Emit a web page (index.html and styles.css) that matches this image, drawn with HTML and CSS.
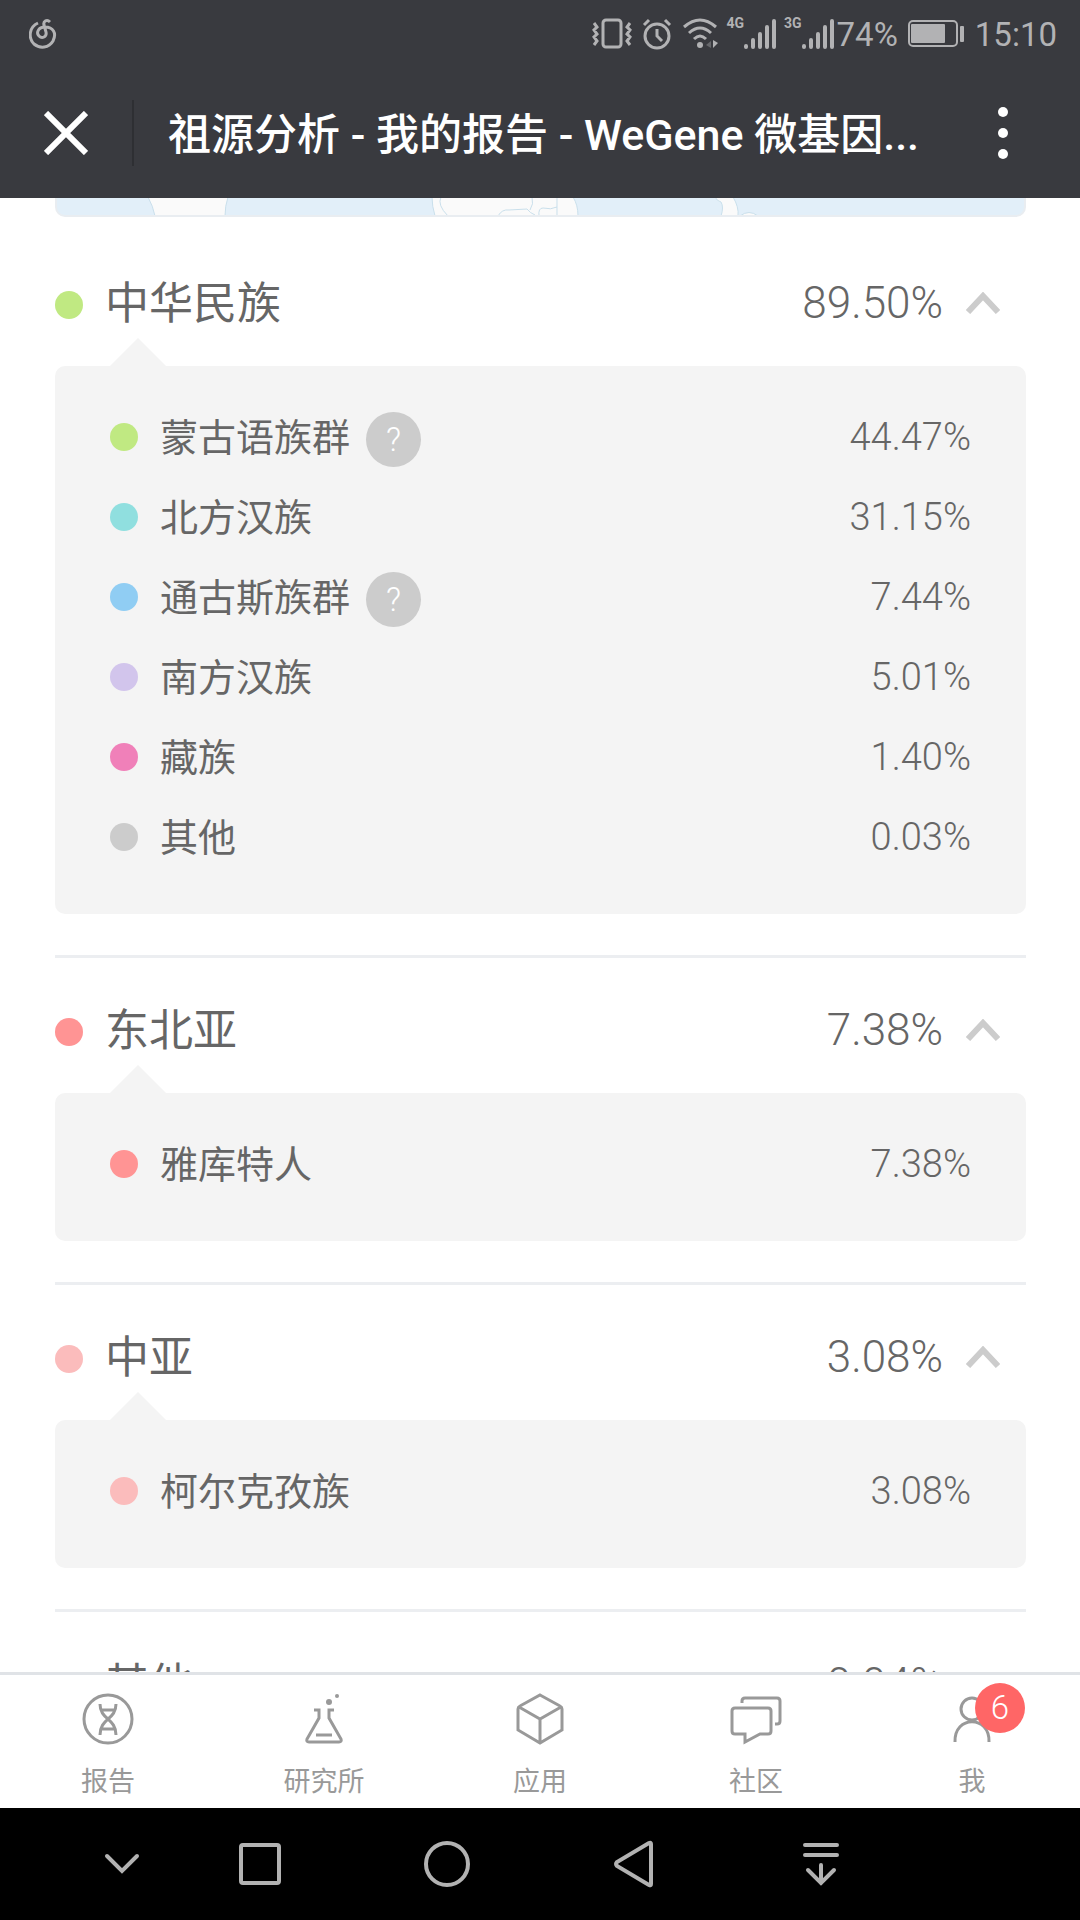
FILE: index.html
```
<!DOCTYPE html>
<html lang="zh-CN">
<head>
    <meta charset="UTF-8">
    <meta name="viewport" content="width=device-width, initial-scale=1.0">
    <title>祖源分析 - 我的报告 - WeGene 微基因</title>
    <link rel="stylesheet" href="styles.css">
</head>
<body>
    <header class="top">
        <div class="status-bar">
            <svg class="music" width="28" height="32" viewBox="0 0 28 32">
                <path d="M9 5C0 9 -1 20 5 26C11 31 20 30 24 23C28 15 24 9 16 9C9 9 7 15 10 18C13 21 18 19 17 14L15 7C14 3 18 1 21 4"/>
            </svg>
            <div class="status-icons">
                <svg width="40" height="32" viewBox="0 0 40 32">
                    <rect class="line" x="11" y="2" width="18" height="27" rx="3"/>
                    <path class="line" d="M2 5l3 4-3 3 3 4-3 3 3 4-3 4M38 5l-3 4 3 3-3 4 3 3-3 4 3 4"/>
                </svg>
                <svg class="alarm" width="30" height="32" viewBox="0 0 30 32">
                    <circle class="line" cx="15" cy="18" r="12"/>
                    <path class="line" d="M15 11v7l5 5M2 7l5-5M28 7l-5-5"/>
                </svg>
                <svg width="36" height="32" viewBox="0 0 36 32">
                    <path class="line" d="M2 9Q18 -5 34 9M7 15Q18 5 29 15M12 21Q18 15 24 21"/>
                    <circle class="fill" cx="18" cy="27" r="3"/>
                    <path class="dim" d="M29 23v7l-5-3z"/>
                    <path class="fill" d="M31 22v8l5-5z"/>
                </svg>
                <span class="net">4G</span>
                <svg width="32" height="32" viewBox="0 0 32 32">
                    <path class="signal" d="M2 28v1M9 22v7M16 16v13M23 9v20M30 3v26"/>
                </svg>
                <span class="net">3G</span>
                <svg width="32" height="32" viewBox="0 0 32 32">
                    <path class="signal" d="M2 28v1M9 22v7M16 16v13M23 9v20M30 3v26"/>
                </svg>
                <span class="battery-text">74%</span>
                <svg class="battery" width="57" height="28" viewBox="0 0 57 28">
                    <rect class="thin" x="1" y="1" width="48" height="25" rx="4"/>
                    <rect class="fill" x="3" y="4" width="34" height="19" rx="1"/>
                    <rect class="fill" x="52" y="6" width="4" height="16" rx="1"/>
                </svg>
                <time>15:10</time>
            </div>
        </div>
        <div class="title-bar">
            <button class="close" aria-label="关闭">
                <svg width="44" height="44" viewBox="0 0 44 44"><path d="M2 2L42 42M42 2L2 42"/></svg>
            </button>
            <h1>祖源分析 - 我的报告 - WeGene 微基因...</h1>
            <button class="more" aria-label="更多">
                <svg width="10" height="54" viewBox="0 0 10 54"><circle cx="5" cy="6" r="5"/><circle cx="5" cy="27" r="5"/><circle cx="5" cy="48" r="5"/></svg>
            </button>
        </div>
    </header>

    <main>
        <div class="map">
            <svg width="966" height="17" viewBox="0 0 966 17">
                <path d="M91 -1H171Q168 8 168 18H98Q96 8 91 -1Z"/>
                <path d="M375 -1H516Q521 7 521 18H378Q375 8 375 -1Z"/>
                <path d="M384 -1Q380 7 391 18M475 -1Q477 6 473 12M441 18Q445 11 452 12L470 11Q473 15 478 17M482 18Q481 10 486 10Q494 12 500 9M500 -1V18"/>
                <path d="M658 -1Q660 3 664 4Q667 9 664 18H681Q682 9 676 -1ZM683 18Q692 11 701 18"/>
            </svg>
        </div>

        <section class="region">
            <div class="region-head">
                <i class="dot green"></i>
                <h2>中华民族</h2>
                <span class="percent">89.50%</span>
                <button class="toggle" aria-label="收起">
                    <svg width="34" height="22" viewBox="0 0 34 22"><path d="M2 20L17 4L32 20"/></svg>
                </button>
            </div>
            <ul class="panel">
                <li><i class="dot green"></i><span class="name">蒙古语族群</span><button class="help">?</button><span class="percent">44.47%</span></li>
                <li><i class="dot cyan"></i><span class="name">北方汉族</span><span class="percent">31.15%</span></li>
                <li><i class="dot blue"></i><span class="name">通古斯族群</span><button class="help">?</button><span class="percent">7.44%</span></li>
                <li><i class="dot purple"></i><span class="name">南方汉族</span><span class="percent">5.01%</span></li>
                <li><i class="dot magenta"></i><span class="name">藏族</span><span class="percent">1.40%</span></li>
                <li><i class="dot gray"></i><span class="name">其他</span><span class="percent">0.03%</span></li>
            </ul>
        </section>

        <section class="region">
            <div class="region-head">
                <i class="dot red"></i>
                <h2>东北亚</h2>
                <span class="percent">7.38%</span>
                <button class="toggle" aria-label="收起">
                    <svg width="34" height="22" viewBox="0 0 34 22"><path d="M2 20L17 4L32 20"/></svg>
                </button>
            </div>
            <ul class="panel">
                <li><i class="dot red"></i><span class="name">雅库特人</span><span class="percent">7.38%</span></li>
            </ul>
        </section>

        <section class="region">
            <div class="region-head">
                <i class="dot pink"></i>
                <h2>中亚</h2>
                <span class="percent">3.08%</span>
                <button class="toggle" aria-label="收起">
                    <svg width="34" height="22" viewBox="0 0 34 22"><path d="M2 20L17 4L32 20"/></svg>
                </button>
            </div>
            <ul class="panel">
                <li><i class="dot pink"></i><span class="name">柯尔克孜族</span><span class="percent">3.08%</span></li>
            </ul>
        </section>

        <section class="region">
            <div class="region-head">
                <i class="dot gray"></i>
                <h2>其他</h2>
                <span class="percent">0.04%</span>
                <button class="toggle" aria-label="收起">
                    <svg width="34" height="22" viewBox="0 0 34 22"><path d="M2 20L17 4L32 20"/></svg>
                </button>
            </div>
        </section>
    </main>

    <nav class="tabs">
        <a href="#">
            <svg width="52" height="52" viewBox="0 0 52 52">
                <circle cx="26" cy="26" r="24"/>
                <path d="M18 11C18 27 34 25 34 42M34 11C34 27 18 25 18 42M20 17H32M20 36H32"/>
            </svg>
            报告
        </a>
        <a href="#">
            <svg width="52" height="52" viewBox="0 0 52 52">
                <path d="M16 17H21V25L9 46Q8 49 11 49H41Q44 49 43 46L31 25V17H36M18 42H34"/>
                <circle class="solid" cx="31" cy="9" r="3"/>
                <circle class="solid" cx="39" cy="3" r="2"/>
            </svg>
            研究所
        </a>
        <a href="#">
            <svg width="52" height="52" viewBox="0 0 52 52">
                <path d="M26 2L46 13Q48 14 48 16V37L26 50L4 37V16Q4 14 6 13ZM5 14L26 26L47 14M26 26V50"/>
            </svg>
            应用
        </a>
        <a href="#">
            <svg width="52" height="52" viewBox="0 0 52 52">
                <path d="M5 15H38Q41 15 41 18V38Q41 41 38 41H30L15 49V41H5Q2 41 2 38V18Q2 15 5 15ZM12 10V8Q12 5 15 5H47Q50 5 50 8V28Q50 31 47 31H45"/>
            </svg>
            社区
        </a>
        <a href="#">
            <span class="me">
                <svg width="52" height="52" viewBox="0 0 52 52">
                    <circle cx="26" cy="16" r="11"/>
                    <path d="M9 49C8 22 44 22 43 49"/>
                </svg>
                <b class="badge">6</b>
            </span>
            我
        </a>
    </nav>

    <footer class="system-nav">
        <button aria-label="隐藏"><svg width="36" height="22" viewBox="0 0 36 22"><path d="M3 3L18 18L33 3"/></svg></button>
        <button aria-label="最近任务"><svg width="44" height="44" viewBox="0 0 44 44"><rect x="3" y="3" width="38" height="38" rx="2"/></svg></button>
        <button aria-label="主页"><svg width="46" height="46" viewBox="0 0 46 46"><circle cx="23" cy="23" r="21"/></svg></button>
        <button aria-label="返回"><svg width="42" height="48" viewBox="0 0 42 48"><path d="M36 3Q38 2 38 4V44Q38 46 36 45L4 26Q2 24 4 22Z"/></svg></button>
        <button aria-label="通知"><svg width="38" height="44" viewBox="0 0 38 44"><path d="M3 3H35M3 13H35M19 23V41M6 28L19 41L32 28"/></svg></button>
    </footer>
</body>
</html>
```

FILE: styles.css
```
* {
    box-sizing: border-box;
}
body {
    margin: 0;
    height: 100vh;
    display: flex;
    flex-direction: column;
    background: #fff;
    color: #666;
    font-family: Roboto, "Noto Sans CJK SC", sans-serif;
}
button {
    padding: 0;
    border: none;
    background: none;
    color: inherit;
    font: inherit;
    display: flex;
    align-items: center;
    justify-content: center;
}
svg {
    display: block;
    flex: none;
    fill: none;
}

/* header */
.top {
    background: #393a3f;
    flex: none;
}
.status-bar {
    height: 68px;
    padding: 0 23px 0 29px;
    display: flex;
    align-items: center;
    justify-content: space-between;
    color: #b2b2b4;
    font-size: 33px;
}
.status-icons {
    display: flex;
    align-items: center;
}
.status-bar .music {
    stroke: #b2b2b4;
    stroke-width: 3;
}
.line {
    stroke: #b2b2b4;
    stroke-width: 3;
}
.thin {
    stroke: #b2b2b4;
    stroke-width: 2;
}
.fill {
    fill: #b2b2b4;
}
.dim {
    fill: #66676b;
}
.signal {
    stroke: #b2b2b4;
    stroke-width: 4;
    stroke-linecap: round;
}
.alarm {
    margin: 0 10px;
}
.net {
    align-self: flex-start;
    margin-left: 8px;
    font-size: 14px;
    font-weight: 700;
}
.battery-text {
    margin-left: 3px;
}
.battery {
    margin: 0 10px;
}
.title-bar {
    height: 130px;
    display: flex;
    align-items: center;
}
.close {
    width: 134px;
    height: 66px;
    border-right: 2px solid #2e2f33;
}
.close svg {
    stroke: #fff;
    stroke-width: 6;
}
h1 {
    flex: 1;
    margin: 0 0 0 34px;
    padding-bottom: 4px;
    color: #fff;
    font-size: 43px;
    font-weight: 500;
    white-space: nowrap;
}
.more {
    width: 154px;
    height: 66px;
}
.more svg {
    fill: #fff;
}

/* content */
main {
    flex: 1;
    min-height: 0;
    overflow: hidden;
    padding: 0 54px 0 55px;
}
.map {
    height: 19px;
    margin-bottom: 14px;
    overflow: hidden;
    background: #e2eff9;
    border: 2px solid #e9edf1;
    border-top: none;
    border-radius: 0 0 10px 10px;
}
.map path {
    fill: #fafafa;
    stroke: #c9dfeb;
}
.region + .region {
    margin-top: 41px;
    border-top: 3px solid #eceef1;
}
.region-head {
    height: 135px;
    padding: 9px 26px 0 0;
    display: flex;
    align-items: center;
    font-size: 44px;
}
.region-head h2 {
    margin: 0 0 0 22px;
    padding-bottom: 6px;
    font-size: 44px;
    font-weight: 400;
}
.dot {
    width: 28px;
    height: 28px;
    border-radius: 50%;
    flex: none;
}
.region-head .dot {
    margin-top: 4px;
}
.green { background: #c0e982; }
.cyan { background: #90dfdf; }
.blue { background: #90cdf3; }
.purple { background: #d2c5ec; }
.magenta { background: #f080b9; }
.gray { background: #ccc; }
.red { background: #ff9494; }
.pink { background: #fbbcbc; }
.percent {
    margin-left: auto;
    font-weight: 300;
}
.toggle {
    margin-left: 23px;
}
.toggle svg {
    stroke: #ccc;
    stroke-width: 6;
}
.panel {
    position: relative;
    margin: 0;
    padding: 31px 55px 37px;
    list-style: none;
    background: #f4f4f4;
    border-radius: 10px;
    font-size: 38px;
}
.panel::before {
    content: "";
    position: absolute;
    left: 55px;
    bottom: 100%;
    border: solid transparent;
    border-width: 0 28px 28px;
    border-bottom-color: #f4f4f4;
}
.panel li {
    height: 80px;
    display: flex;
    align-items: center;
}
.panel .dot {
    margin-right: 22px;
}
.name {
    padding-bottom: 6px;
}
.help {
    width: 55px;
    height: 55px;
    margin: 4px 0 0 16px;
    border-radius: 50%;
    background: #ccc;
    color: #fff;
    font-size: 33px;
    font-weight: 300;
}

/* tabs */
.tabs {
    flex: none;
    display: flex;
    border-top: 3px solid #e0e3e7;
    background: #fff;
}
.tabs a {
    flex: 1;
    height: 133px;
    padding-top: 18px;
    display: flex;
    flex-direction: column;
    align-items: center;
    gap: 17px;
    color: #999;
    font-size: 27px;
    line-height: 40px;
    text-decoration: none;
}
.tabs svg {
    stroke: #999;
    stroke-width: 3;
}
.tabs .solid {
    fill: #999;
    stroke: none;
}
.me {
    position: relative;
}
.badge {
    position: absolute;
    top: -10px;
    left: 29px;
    width: 50px;
    height: 50px;
    border-radius: 50%;
    background: #ff6666;
    color: #fff;
    font-size: 33px;
    font-weight: 300;
    line-height: 50px;
    text-align: center;
}

/* system buttons */
.system-nav {
    flex: none;
    height: 112px;
    padding: 0 165px 0 78px;
    display: grid;
    grid-template-columns: 88fr 187fr 187fr 187fr 187fr;
    background: #000;
}
.system-nav svg {
    stroke: #b2b2b2;
    stroke-width: 4;
    stroke-linecap: round;
}
```
